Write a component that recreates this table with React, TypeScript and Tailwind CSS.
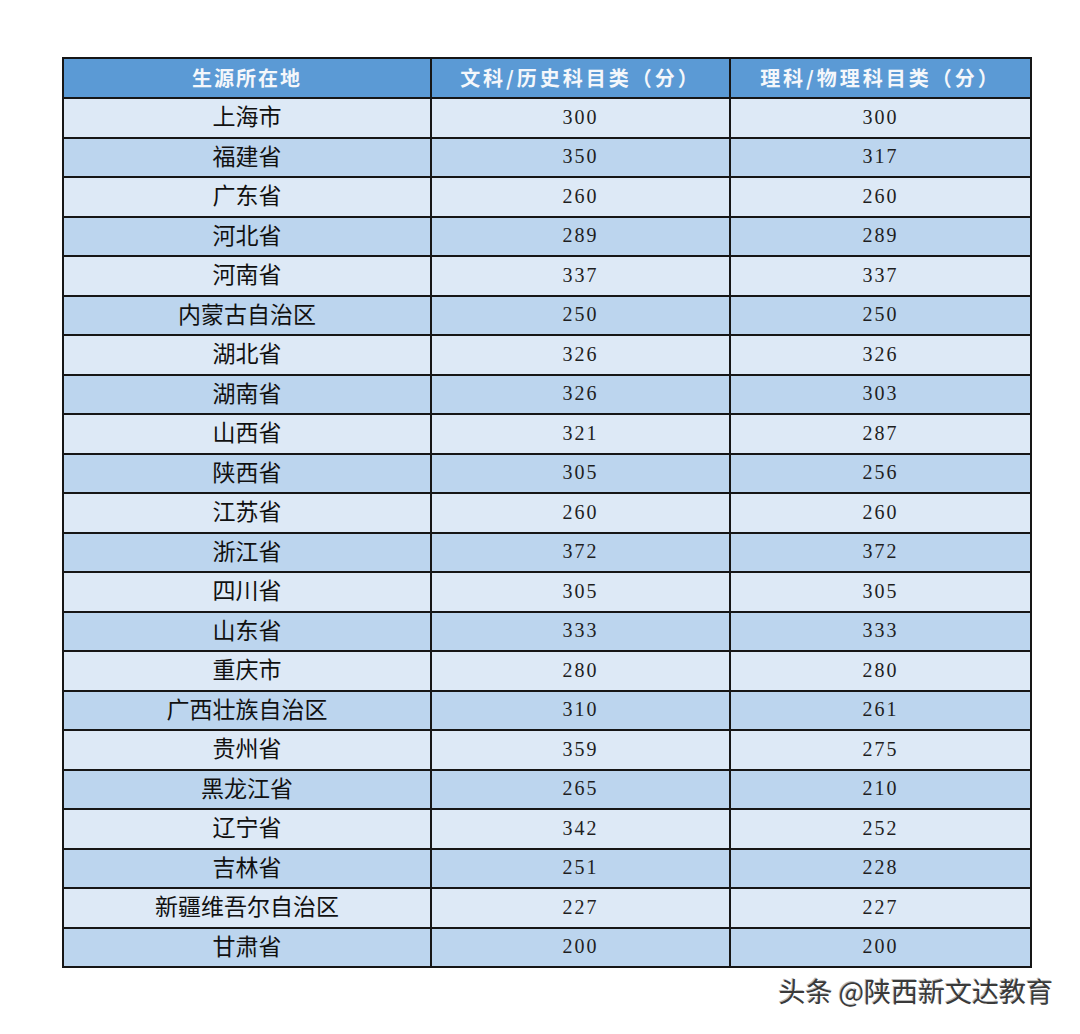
const rows: [string, number, number][] = [
  ['上海市', 300, 300],
  ['福建省', 350, 317],
  ['广东省', 260, 260],
  ['河北省', 289, 289],
  ['河南省', 337, 337],
  ['内蒙古自治区', 250, 250],
  ['湖北省', 326, 326],
  ['湖南省', 326, 303],
  ['山西省', 321, 287],
  ['陕西省', 305, 256],
  ['江苏省', 260, 260],
  ['浙江省', 372, 372],
  ['四川省', 305, 305],
  ['山东省', 333, 333],
  ['重庆市', 280, 280],
  ['广西壮族自治区', 310, 261],
  ['贵州省', 359, 275],
  ['黑龙江省', 265, 210],
  ['辽宁省', 342, 252],
  ['吉林省', 251, 228],
  ['新疆维吾尔自治区', 227, 227],
  ['甘肃省', 200, 200],
];

const cjk = "font-['Noto_Sans_CJK_SC',sans-serif]";
const serif = "font-['Liberation_Serif','Noto_Sans_CJK_SC',serif]";

export default function App() {
  return (
    <div className="w-[1080px] h-[1034px] bg-white pt-[57px] pl-[62px]">
      <table className="w-[968px] table-fixed border-collapse border-2 border-[#161616]">
        <colgroup>
          <col className="w-[368px]" />
          <col className="w-[299px]" />
          <col className="w-[301px]" />
        </colgroup>
        <thead>
          <tr className="h-[40px] bg-[#5b9ad5] text-[#f4f7fb]">
            <th className={`border-2 border-[#161616] text-[20px] font-bold tracking-[2px] ${cjk}`}>生源所在地</th>
            <th className={`border-2 border-[#161616] text-[20px] font-bold tracking-[3px] ${cjk}`}>文科/历史科目类（分）</th>
            <th className={`border-2 border-[#161616] text-[20px] font-bold tracking-[3px] ${cjk}`}>理科/物理科目类（分）</th>
          </tr>
        </thead>
        <tbody>
          {rows.map(([name, a, b], i) => (
            <tr key={name} className={`h-[39.5px] ${i % 2 === 0 ? 'bg-[#dde9f6]' : 'bg-[#bcd5ee]'}`}>
              <td className={`border-2 border-[#161616] pb-[4px] text-center text-[23px] leading-none text-[#111] ${cjk}`}>{name}</td>
              <td className={`border-2 border-[#161616] pb-[2px] text-center text-[20px] leading-none tracking-[2px] text-[#1e1e1e] ${serif}`}>{a}</td>
              <td className={`border-2 border-[#161616] pb-[2px] text-center text-[20px] leading-none tracking-[2px] text-[#1e1e1e] ${serif}`}>{b}</td>
            </tr>
          ))}
        </tbody>
      </table>
      <div className="flex justify-end pr-[27px] pt-[6px]">
        <span className={`text-[27px] leading-[34px] text-[#3a3a3a] [text-shadow:1px_1px_0_#ffffff,-1px_-1px_0_#bbbbbb] ${cjk}`}>
          头条 @陕西新文达教育
        </span>
      </div>
    </div>
  );
}
